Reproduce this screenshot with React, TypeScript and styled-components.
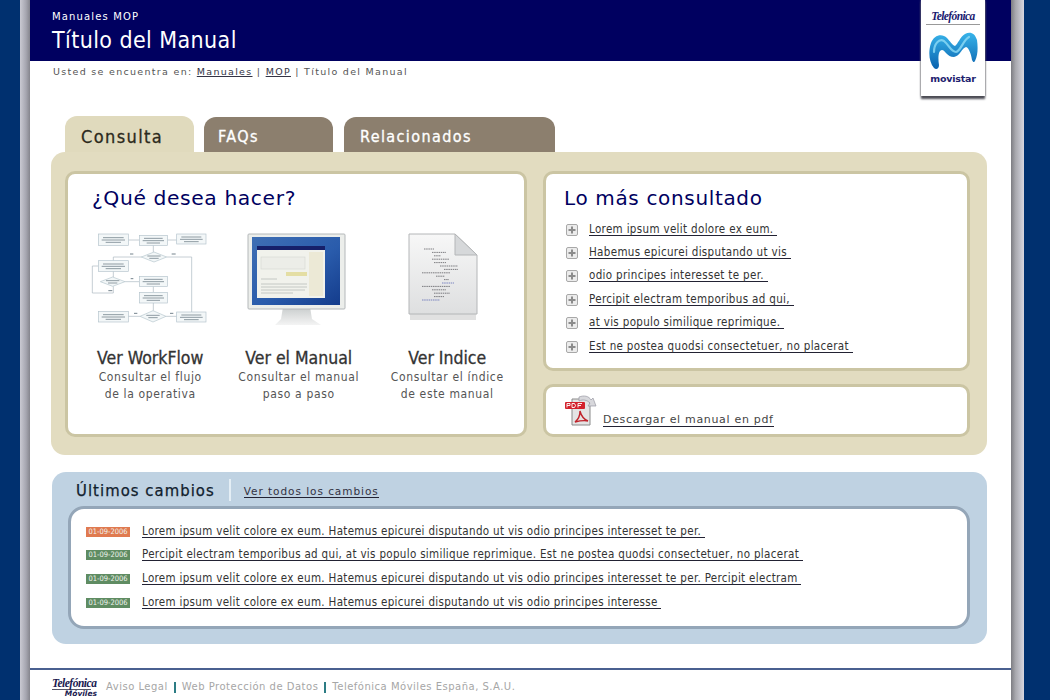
import * as React from "react"
import styled, { createGlobalStyle } from "styled-components"

const GlobalStyle = createGlobalStyle`
    html, body {
        margin: 0;
        padding: 0;
        height: 100%;
        overflow: hidden;
        background: #00306f;
    }
`

const condensed = `"DejaVu Sans Condensed", "DejaVu Sans", sans-serif`
const wide = `"DejaVu Sans", Verdana, sans-serif`

const boxes = [
    [115, 58, 90, 34], [238, 62, 84, 30], [350, 58, 88, 30], [115, 138, 90, 32],
    [238, 185, 84, 30], [238, 233, 84, 32], [115, 290, 90, 32], [350, 292, 88, 30],
]
const diamonds = [
    [282, 127, 38, 15], [158, 201, 37, 14], [279, 305, 39, 17],
]
const links = [
    "M205 76H238", "M322 76H350", "M280 92V112", "M245 127H160V138", "M320 127H395V292",
    "M160 170V187", "M195 201H238", "M280 215V233", "M280 265V288", "M240 305H205",
    "M318 305H350", "M115 154H97V235H160V215",
]

const FlowchartIcon = () => (
    <svg width="120" height="100" viewBox="90 40 360 300">
        <g fill="none" stroke="#a9b6c0" strokeWidth="2">
            {links.map(d => <path key={d} d={d} />)}
        </g>
        {boxes.map(([x, y, w, h]) => (
            <g key={`${x}-${y}`}>
                <rect x={x} y={y} width={w} height={h} fill="#f3f7f8" stroke="#b4c4cc" strokeWidth="2" />
                <path d={`M${x + 14} ${y + h / 2 - 6}H${x + w - 14}M${x + 10} ${y + h / 2 + 1}H${x + w - 10}M${x + 22} ${y + h / 2 + 8}H${x + w - 22}`} stroke="#74838c" strokeWidth="2.4" />
            </g>
        ))}
        {diamonds.map(([cx, cy, rx, ry]) => (
            <g key={`${cx}-${cy}`}>
                <path d={`M${cx - rx} ${cy}L${cx} ${cy - ry}L${cx + rx} ${cy}L${cx} ${cy + ry}Z`} fill="#f3f7f8" stroke="#b4c4cc" strokeWidth="2" />
                <path d={`M${cx - 20} ${cy - 3}H${cx + 20}M${cx - 14} ${cy + 4}H${cx + 14}`} stroke="#74838c" strokeWidth="2.4" />
            </g>
        ))}
        <path d="M210 118h10M335 118h12M212 192h8M330 296h10M222 296h10M145 228h12" stroke="#74838c" strokeWidth="3" />
    </svg>
)

const MonitorIcon = () => (
    <svg width="100" height="94" viewBox="0 0 100 94">
        <defs>
            <linearGradient id="scr" x1="0" y1="0" x2="1" y2="1">
                <stop offset="0" stopColor="#3f6fb4" />
                <stop offset="0.55" stopColor="#2a5cac" />
                <stop offset="1" stopColor="#143c8c" />
            </linearGradient>
            <linearGradient id="foot" x1="0" y1="0" x2="0" y2="1">
                <stop offset="0" stopColor="#c8cccc" />
                <stop offset="1" stopColor="#f4f4f4" />
            </linearGradient>
        </defs>
        <path d="M36 74H63L65 86L74 92H28L34 86Z" fill="url(#foot)" />
        <rect x="1" y="1" width="97" height="75" rx="1" fill="#eceeeb" stroke="#b4b8ba" />
        <rect x="5" y="4" width="88" height="68" fill="url(#scr)" />
        <rect x="10" y="13" width="68" height="52" fill="#f1f2ec" />
        <rect x="10" y="13" width="68" height="4" fill="#16206a" />
        <rect x="14" y="24" width="44" height="12" fill="#ecede8" stroke="#d0d2cc" strokeWidth="0.5" />
        <rect x="62" y="19" width="14" height="44" fill="#ece9d6" />
        <rect x="39" y="39" width="21" height="4" fill="#e4dea4" />
        <path d="M14 46H30M14 51H60M14 54H60M14 57H58M14 60H46" stroke="#c4c8c4" strokeWidth="1" />
    </svg>
)

const scribble = [
    [16, 10], [24, 14], [26, 7], [24, 17], [26, 12], [32, 18], [36, 14], [14, 28], [28, 9],
    [36, 5], [34, 12], [14, 28], [24, 14], [26, 16], [26, 10], [14, 18],
]

const DocumentIcon = () => (
    <svg width="72" height="92" viewBox="0 0 72 92">
        <defs>
            <linearGradient id="paper" x1="0" y1="0" x2="0" y2="1">
                <stop offset="0" stopColor="#f7f7f7" />
                <stop offset="1" stopColor="#dedfe0" />
            </linearGradient>
        </defs>
        <rect x="2" y="81" width="66" height="6" fill="#d4d4d4" opacity="0.7" />
        <path d="M1 1H47L69 22V81H1Z" fill="url(#paper)" stroke="#b4b6b8" />
        <path d="M47 1V22H69Z" fill="#d6d8da" stroke="#b4b6b8" />
        {scribble.map(([x, w], i) => (
            <path key={i} d={`M${x} ${16 + i * 3.4}h${w}`} stroke={i === 10 || i === 15 ? "#4a5ab0" : "#4a4a50"} strokeWidth="0.7" strokeDasharray="1.5 0.7" />
        ))}
    </svg>
)

const PlusIcon = () => (
    <svg width="12" height="12" viewBox="0 0 12 12">
        <rect x="0.5" y="0.5" width="11" height="11" rx="1.5" fill="#ececec" stroke="#a8a8a8" />
        <path d="M6 2.5V9.5M2.5 6H9.5" stroke="#8c8c8c" strokeWidth="2" />
    </svg>
)

const PdfIcon = () => (
    <svg width="32" height="31" viewBox="0 0 32 31">
        <path d="M7 4H22L25 7V30H7Z" fill="#e4e4e4" stroke="#8a8a8a" />
        <path d="M14 2C19 0 24 1 26 5L28 3L31 11L23 11L25 8C22 5 18 4 14 6Z" fill="#d8d8dc" stroke="#9a9aa4" strokeWidth="0.7" />
        <rect x="0" y="7" width="20" height="7" rx="1" fill="#d3222c" />
        <path d="M2 12.5V8.5H5V10.5H2M7 8.5V12.5H9.5L10.5 10.5L9.5 8.5ZM13 12.5V8.5H17M13 10.5H16" fill="none" stroke="#fff" strokeWidth="0.9" />
        <path d="M10 27C14 24 15 19 15 16C16 20 18 24 23 26C18 25 14 26 10 27Z" fill="none" stroke="#c0232b" strokeWidth="1.4" />
    </svg>
)

const MovistarMark = () => (
    <svg width="49" height="37" viewBox="0 0 49 37">
        <defs>
            <linearGradient id="m" x1="0" y1="0" x2="0" y2="1">
                <stop offset="0" stopColor="#38b4ea" />
                <stop offset="1" stopColor="#0a62ae" />
            </linearGradient>
        </defs>
        <path d="M5 36C0 30-1 20 2 11C5 3 13 1 18 6C21 9 23 13 26 14C29 12 31 5 36 2C41-1 46 1 48 8C49 15 49 23 46 29C45 31 44 30 43 28C42 22 40 16 37 15C33 16 31 24 25 25C18 25 16 18 13 18C9 18 9 27 10 33C10 37 7 38 5 36Z" fill="url(#m)" />
        <path d="M5 20C5 12 10 6 15 9C20 13 22 20 27 20C32 19 34 8 40 5" fill="none" stroke="#8fdcf6" strokeWidth="2.2" strokeLinecap="round" opacity="0.8" />
    </svg>
)

const changes = [
    { date: "01-09-2006", hot: true, text: "Lorem ipsum velit colore ex eum. Hatemus epicurei disputando ut vis odio principes interesset te per." },
    { date: "01-09-2006", hot: false, text: "Percipit electram temporibus ad qui, at vis populo similique reprimique. Est ne postea quodsi consectetuer, no placerat" },
    { date: "01-09-2006", hot: false, text: "Lorem ipsum velit colore ex eum. Hatemus epicurei disputando ut vis odio principes interesset te per. Percipit electram" },
    { date: "01-09-2006", hot: false, text: "Lorem ipsum velit colore ex eum. Hatemus epicurei disputando ut vis odio principes interesse" },
]

const popular = [
    "Lorem ipsum velit dolore ex eum.",
    "Habemus epicurei disputando ut vis",
    "odio principes interesset te per.",
    "Percipit electram temporibus ad qui,",
    "at vis populo similique reprimique.",
    "Est ne postea quodsi consectetuer, no placerat",
]

export default function App() {
    return (
        <>
            <GlobalStyle />
            <Shell>
                <LeftEdge />
                <Page>
                    <Header>
                        <Kicker>Manuales MOP</Kicker>
                        <Title>Título del Manual</Title>
                    </Header>
                    <LogoCard>
                        <TelefonicaMark>Telefónica</TelefonicaMark>
                        <MovistarMark />
                        <MovistarName>movistar</MovistarName>
                    </LogoCard>
                    <Breadcrumb>
                        Usted se encuentra en: <a>Manuales</a> | <a>MOP</a> | Título del Manual
                    </Breadcrumb>
                    <Content>
                        <Tabs>
                            <Tab $active $width={129} $pad={16}>Consulta</Tab>
                            <Tab $width={129} $pad={14}>FAQs</Tab>
                            <Tab $width={211} $pad={16}>Relacionados</Tab>
                        </Tabs>
                        <TanPanel>
                            <WhatCard>
                                <CardHeading>¿Qué desea hacer?</CardHeading>
                                <Options>
                                    <Option>
                                        <OptionArt $top={1}><FlowchartIcon /></OptionArt>
                                        <OptionTitle>Ver WorkFlow</OptionTitle>
                                        <OptionText>Consultar el flujo<br />de la operativa</OptionText>
                                    </Option>
                                    <Option>
                                        <OptionArt $top={6} $shift={2}><MonitorIcon /></OptionArt>
                                        <OptionTitle>Ver el Manual</OptionTitle>
                                        <OptionText>Consultar el manual<br />paso a paso</OptionText>
                                    </Option>
                                    <Option>
                                        <OptionArt $top={6} $shift={3}><DocumentIcon /></OptionArt>
                                        <OptionTitle>Ver Indice</OptionTitle>
                                        <OptionText>Consultar el índice<br />de este manual</OptionText>
                                    </Option>
                                </Options>
                            </WhatCard>
                            <SideColumn>
                                <PopularCard>
                                    <PopularHeading>Lo más consultado</PopularHeading>
                                    <PopularList>
                                        {popular.map(p => (
                                            <PopularRow key={p}>
                                                <PlusIcon />
                                                <PopularLink>{p}&nbsp;</PopularLink>
                                            </PopularRow>
                                        ))}
                                    </PopularList>
                                </PopularCard>
                                <DownloadCard>
                                    <PdfIcon />
                                    <DownloadLink>Descargar el manual en pdf</DownloadLink>
                                </DownloadCard>
                            </SideColumn>
                        </TanPanel>
                        <BluePanel>
                            <ChangesHeader>
                                <ChangesTitle>Últimos cambios</ChangesTitle>
                                <ChangesAll>Ver todos los cambios</ChangesAll>
                            </ChangesHeader>
                            <ChangesCard>
                                {changes.map(c => (
                                    <ChangeRow key={c.text}>
                                        <DateBadge $hot={c.hot}>{c.date}</DateBadge>
                                        <ChangeLink>{c.text}&nbsp;</ChangeLink>
                                    </ChangeRow>
                                ))}
                            </ChangesCard>
                        </BluePanel>
                    </Content>
                    <Footer>
                        <FooterLogo>
                            <FooterBrand>Telefónica</FooterBrand>
                            <FooterSub>Móviles</FooterSub>
                        </FooterLogo>
                        <FooterLinks>
                            <span>Aviso Legal</span>
                            <FooterBar />
                            <span>Web Protección de Datos</span>
                            <FooterBar />
                            <span>Telefónica Móviles España, S.A.U.</span>
                        </FooterLinks>
                    </Footer>
                </Page>
                <RightEdge />
            </Shell>
        </>
    )
}

const Shell = styled.div`
    display: flex;
    height: 700px;
    width: 1050px;
    padding-left: 20px;
    box-sizing: border-box;
    background: #00306f;
`

const LeftEdge = styled.div`
    width: 10px;
    background: linear-gradient(to right, #c9c9d2, #a6a6b0 60%, #85858d);
`

const RightEdge = styled.div`
    width: 13px;
    background: linear-gradient(to right, #7c7c82, #a8a8ae 35%, #d6d6e0);
`

const Page = styled.div`
    position: relative;
    width: 981px;
    background: #fff;
    display: flex;
    flex-direction: column;
`

const Header = styled.div`
    height: 61px;
    box-sizing: border-box;
    padding: 11px 0 0 22px;
    background: #000060;
    color: #fff;
`

const Kicker = styled.div`
    font: 10px/12px ${wide};
    letter-spacing: 1.15px;
`

const Title = styled.div`
    margin-top: 3px;
    font: 23px/28px ${condensed};
    letter-spacing: 0.4px;
`

const LogoCard = styled.div`
    position: absolute;
    top: 0;
    left: 891px;
    width: 64px;
    height: 96px;
    box-sizing: border-box;
    padding-top: 10px;
    background: #fff;
    box-shadow: 0 3px 2px #4c4c54, 0 0 2px #888;
    display: flex;
    flex-direction: column;
    align-items: center;
`

const TelefonicaMark = styled.div`
    width: 54px;
    padding-bottom: 1px;
    margin-bottom: 7px;
    border-bottom: 1px solid #999;
    text-align: center;
    font: italic bold 11.5px/13px "Liberation Serif", serif;
    letter-spacing: -0.6px;
    color: #1a1a70;
`

const MovistarName = styled.div`
    margin-top: 4px;
    font: bold 9.5px/12px ${wide};
    letter-spacing: -0.2px;
    color: #22226e;
`

const Breadcrumb = styled.div`
    padding: 5px 0 0 23px;
    height: 50px;
    box-sizing: border-box;
    font: 9.5px/12px ${wide};
    letter-spacing: 1.3px;
    color: #555;

    a {
        color: #334;
        text-decoration: underline;
    }
`

const Content = styled.div`
    padding: 5px 24px 0 21px;
`

const Tabs = styled.div`
    display: flex;
    align-items: flex-end;
    gap: 10px;
    padding-left: 14px;
    height: 36px;

    & > :last-child {
        margin-left: 1px;
    }
`

const Tab = styled.div<{ $active?: boolean; $width: number; $pad: number }>`
    width: ${p => p.$width}px;
    height: ${p => (p.$active ? 36 : 35)}px;
    box-sizing: border-box;
    padding: ${p => (p.$active ? 8 : 7)}px 0 0 ${p => p.$pad}px;
    border-radius: 12px 12px 0 0;
    background: ${p => (p.$active ? "#e0dabd" : "#8c7f6e")};
    color: ${p => (p.$active ? "#2c2a1c" : "#fff")};
    font: 500 ${p => (p.$active ? 18 : 16)}px/26px ${condensed};
    letter-spacing: 1.4px;
    -webkit-text-stroke: 0.3px currentColor;
`

const TanPanel = styled.div`
    height: 303px;
    box-sizing: border-box;
    padding: 19px 17px 0 14px;
    border-radius: 14px;
    background: #e2dcc0;
    display: flex;
    gap: 16px;
`

const cardBox = `
    box-sizing: border-box;
    background: #fff;
    border: 3px solid #cbc5a3;
    border-radius: 10px;
`

const WhatCard = styled.div`
    ${cardBox}
    width: 462px;
    height: 266px;
    padding: 11px 0 0 8px;
`

const CardHeading = styled.h2`
    margin: 0 0 0 16px;
    font: 400 20.3px/26px ${wide};
    letter-spacing: 0.6px;
    color: #000060;
`

const Options = styled.div`
    display: grid;
    grid-template-columns: repeat(3, 148.5px);
    margin-top: 16px;
`

const Option = styled.div`
    display: flex;
    flex-direction: column;
    align-items: center;
    text-align: center;
`

const OptionArt = styled.div<{ $top: number; $shift?: number }>`
    height: 104px;
    box-sizing: border-box;
    padding-top: ${p => p.$top}px;
    margin-right: ${p => (p.$shift ?? 0) * 2}px;
    display: flex;
    align-items: flex-start;
    justify-content: center;
`

const OptionTitle = styled.div`
    margin-top: 17px;
    font: 500 17.5px/20px ${condensed};
    color: #333;
    -webkit-text-stroke: 0.3px currentColor;
`

const OptionText = styled.div`
    margin-top: 1px;
    font: 12px/17px ${condensed};
    letter-spacing: 0.65px;
    color: #555;
`

const SideColumn = styled.div`
    width: 427px;
    display: flex;
    flex-direction: column;
    gap: 13px;
`

const PopularCard = styled.div`
    ${cardBox}
    height: 200px;
    padding: 11px 0 0 18px;
`

const PopularHeading = styled.h2`
    margin: 0;
    font: 400 20px/26px ${wide};
    letter-spacing: 0.65px;
    color: #000060;
`

const PopularList = styled.div`
    margin-top: 7px;
    display: flex;
    flex-direction: column;
`

const PopularRow = styled.div`
    height: 23.4px;
    display: flex;
    align-items: center;
    gap: 11px;
    padding-left: 2px;
`

const underlined = `
    border-bottom: 1px solid #223;
    color: #333;
    white-space: nowrap;
`

const PopularLink = styled.span`
    ${underlined}
    font: 11.5px/11px ${condensed};
    letter-spacing: 0.34px;
`

const DownloadCard = styled.div`
    ${cardBox}
    height: 53px;
    padding: 8px 0 0 19px;
    display: flex;
    align-items: flex-start;
    gap: 6px;
`

const DownloadLink = styled.span`
    ${underlined}
    margin-top: 18px;
    font: 11px/13px ${wide};
    letter-spacing: 0.68px;
    color: #444;
`

const BluePanel = styled.div`
    margin: 17px 0 0 1px;
    height: 172px;
    box-sizing: border-box;
    padding: 0 17px 0 16px;
    border-radius: 14px;
    background: #bfd2e2;
`

const ChangesHeader = styled.div`
    height: 34px;
    padding-left: 8px;
    display: flex;
    align-items: center;
`

const ChangesTitle = styled.div`
    padding-right: 14px;
    margin-right: 13px;
    height: 22px;
    margin-top: 1px;
    border-right: 2px solid #e4eef5;
    font: 500 16.5px/24px ${condensed};
    letter-spacing: 1.05px;
    color: #10202c;
    -webkit-text-stroke: 0.25px currentColor;
`

const ChangesAll = styled.span`
    ${underlined}
    margin-top: 4px;
    font: 10.5px/12px ${wide};
    letter-spacing: 0.95px;
    color: #334;
`

const ChangesCard = styled.div`
    height: 123px;
    box-sizing: border-box;
    padding: 11px 0 0 15px;
    background: #fff;
    border: 3px solid #94a6b8;
    border-radius: 16px;
    display: flex;
    flex-direction: column;
`

const ChangeRow = styled.div`
    height: 23.6px;
    display: flex;
    align-items: center;
    gap: 12px;
`

const DateBadge = styled.span<{ $hot: boolean }>`
    width: 44px;
    height: 10px;
    text-align: center;
    background: ${p => (p.$hot ? "#e07a50" : "#5f8c62")};
    color: #f0f4ee;
    font: 7.5px/10px ${condensed};
    overflow: hidden;
`

const ChangeLink = styled.span`
    ${underlined}
    font: 11.5px/11px ${condensed};
    letter-spacing: 0.32px;
`

const Footer = styled.div`
    margin-top: 24px;
    flex: 1;
    border-top: 2px solid #4a6090;
    padding: 7px 0 0 22px;
    display: flex;
    gap: 9px;
`

const FooterLogo = styled.div`
    width: 45px;
    display: flex;
    flex-direction: column;
`

const FooterBrand = styled.div`
    font: italic bold 11.5px/12px "Liberation Serif", serif;
    letter-spacing: -0.5px;
    color: #1a1a50;
    border-bottom: 1px solid #556;
    width: 39px;
`

const FooterSub = styled.div`
    align-self: flex-end;
    font: italic bold 7.5px/8px ${wide};
    color: #1a1a50;
`

const FooterLinks = styled.div`
    display: flex;
    align-items: center;
    height: 18px;
    margin-top: 1px;
    gap: 6px;
    font: 10px/14px ${wide};
    letter-spacing: 0.5px;
    color: #a6a6a6;
`

const FooterBar = styled.span`
    width: 2px;
    height: 11px;
    background: #2c7c84;
`
